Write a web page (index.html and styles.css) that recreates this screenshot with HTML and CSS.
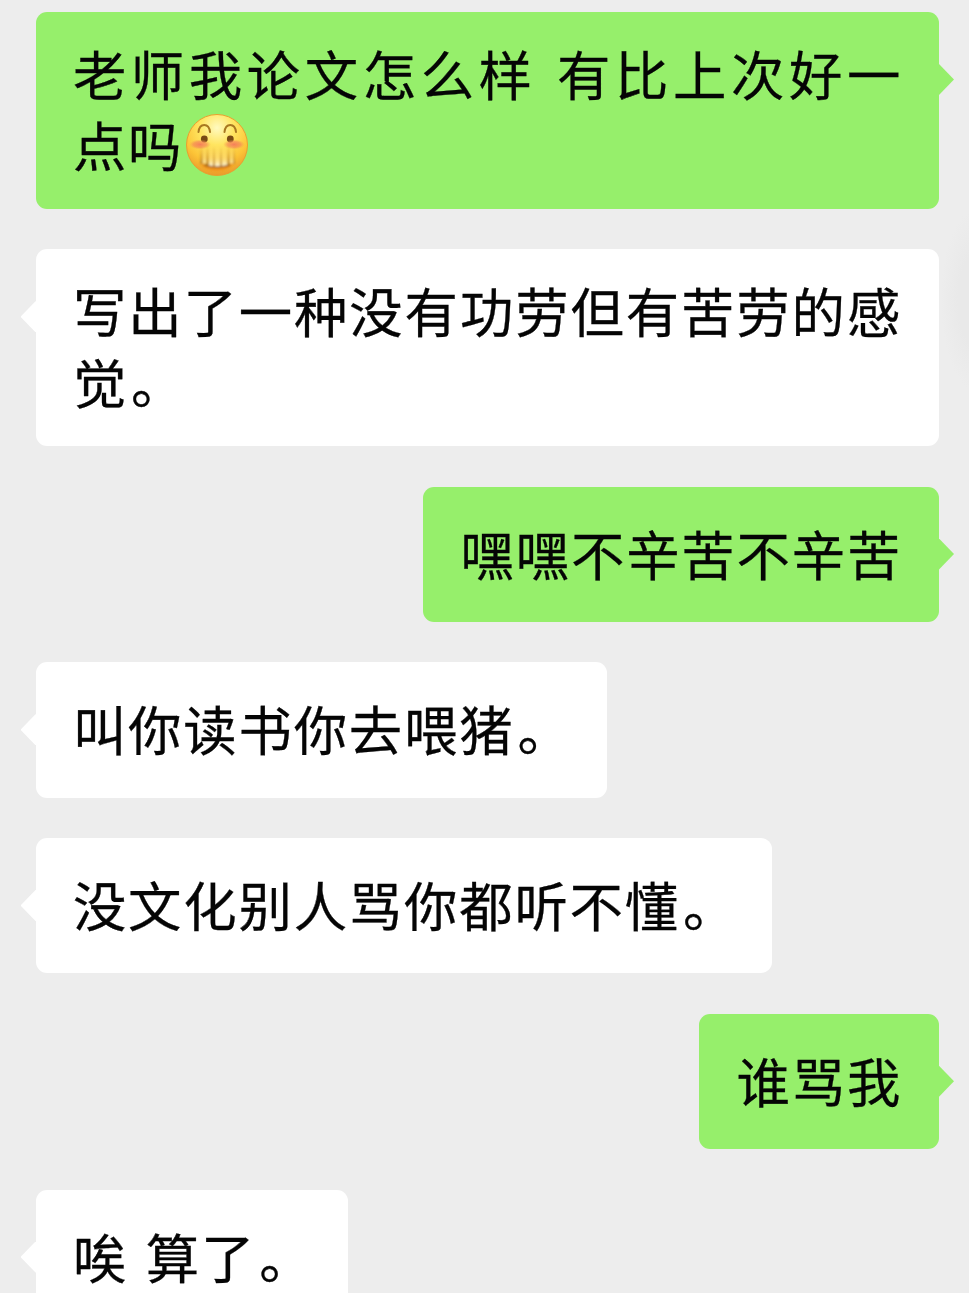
FILE: index.html
```html
<!DOCTYPE html>
<html lang="zh-CN">

<head>
    <meta charset="UTF-8">
    <meta name="viewport" content="width=device-width, initial-scale=1.0">
    <title>聊天</title>
    <link rel="stylesheet" href="styles.css">
</head>

<body>
    <div class="chat">
        <div class="bubble me long">老师我论文怎么样 有比上次好一点吗<svg class="emoji" viewBox="0 0 62 62">
                <defs>
                    <radialGradient id="face" cx="50%" cy="22%" r="80%">
                        <stop offset="0" stop-color="#fffac0" />
                        <stop offset="0.35" stop-color="#ffe560" />
                        <stop offset="0.7" stop-color="#fcc437" />
                        <stop offset="1" stop-color="#e8962a" />
                    </radialGradient>
                    <radialGradient id="cheek">
                        <stop offset="0" stop-color="#f4705c" stop-opacity="0.85" />
                        <stop offset="0.6" stop-color="#f58458" stop-opacity="0.65" />
                        <stop offset="1" stop-color="#f5a050" stop-opacity="0" />
                    </radialGradient>
                    <linearGradient id="tear" x1="0" y1="0" x2="0" y2="1">
                        <stop offset="0" stop-color="#ffe98a" stop-opacity="0" />
                        <stop offset="0.6" stop-color="#fff0a8" stop-opacity="0.4" />
                        <stop offset="1" stop-color="#fffbe8" />
                    </linearGradient>
                    <linearGradient id="shade" x1="0" y1="0" x2="0" y2="1">
                        <stop offset="0" stop-color="#d39a28" stop-opacity="0" />
                        <stop offset="1" stop-color="#a87828" stop-opacity="0.75" />
                    </linearGradient>
                    <filter id="soft">
                        <feGaussianBlur stdDeviation="0.9" />
                    </filter>
                </defs>
                <circle cx="31" cy="31" r="30.5" fill="url(#face)" stroke="#e8a030" />
                <!-- brows and eyes -->
                <path d="M12.500 18c1-9.500 10.500-9.500 11.500 0M38.500 18c1-9.500 10.500-9.500 11.500 0" fill="none" stroke="#a87820" stroke-width="2" stroke-linecap="round" />
                <circle cx="18.3" cy="25" r="3.4" fill="#784a14" />
                <circle cx="44.3" cy="25" r="3.4" fill="#784a14" />
                <ellipse cx="14" cy="30.5" rx="11" ry="5" fill="url(#cheek)" />
                <ellipse cx="48" cy="30.5" rx="11" ry="5" fill="url(#cheek)" />
                <!-- mouth -->
                <g filter="url(#soft)">
                    <path d="M14 50q17 5 34 0q-6 7-17 7t-17-7z" fill="#f0921e" />
                    <path d="M14 32h3v18h-3zM20 31h3v21h-3zM27 33h2v19h-2zM34 33h2v19h-2zM41 31h3v21h-3zM47 32h2v18h-2z" fill="url(#shade)" />
                    <path d="M17 32h3v17h-3zM23 31h4v21h-4zM29 31h5v22h-5zM36 31h5v21h-5zM44 32h3v17h-3z" fill="url(#tear)" />
                    <path d="M18 51q13 4 26 0" fill="none" stroke="#9a641c" stroke-width="1.500" />
                </g>
            </svg></div>
        <div class="bubble other long">写出了一种没有功劳但有苦劳的感觉<span class="stop">。</span></div>
        <div class="bubble me">嘿嘿不辛苦不辛苦</div>
        <div class="bubble other">叫你读书你去喂猪<span class="stop">。</span></div>
        <div class="bubble other">没文化别人骂你都听不懂<span class="stop">。</span></div>
        <div class="bubble me">谁骂我</div>
        <div class="bubble other">唉 算了<span class="stop">。</span></div>
    </div>
</body>

</html>
```
FILE: styles.css
```css
body {
    margin: 0;
    height: 1293px;
    overflow: hidden;
    background-color: #ededed;
    background-image: radial-gradient(ellipse 34px 90px at 975px 300px, #e9e9e9 50%, #ededed);
    background-repeat: no-repeat;
}

.chat {
    display: flex;
    flex-direction: column;
    gap: 40.5px;
    padding: 12px 30px 0 35.5px;
}

.bubble {
    position: relative;
    box-sizing: border-box;
    max-width: 903.5px;
    padding: 30px 36.9px 34.25px 37.4px;
    border-radius: 11px;
    font-family: "Noto Sans CJK SC", sans-serif;
    font-size: 53.4px;
    letter-spacing: 1.8px;
    line-height: 71px;
    word-spacing: 4px;
    white-space: nowrap;
    color: #050505;
    -webkit-text-stroke: 0.3px #050505;
}

.bubble.long {
    padding-top: 25px;
    padding-bottom: 29.75px;
    text-align: justify;
    white-space: normal;
}

/* little arrow on the side of the bubble */
.bubble::after {
    content: "";
    position: absolute;
    top: 52px;
    width: 16px;
    height: 31px;
}

.me {
    align-self: flex-end;
    background-color: #96ef6b;
}

.me::after {
    right: -15px;
    background-color: #96ef6b;
    clip-path: polygon(0 0, 1px 0, 100% 50%, 1px 100%, 0 100%);
}

.other {
    align-self: flex-start;
    background-color: #fff;
}

.other::after {
    left: -15px;
    background-color: #fff;
    clip-path: polygon(100% 0, 15px 0, 0 50%, 15px 100%, 100% 100%);
}

.stop {
    margin-left: 3px;
    letter-spacing: -1.2px;
}

.emoji {
    width: 62px;
    height: 62px;
    margin-left: 2.5px;
    margin-top: -10px;
    margin-bottom: -10px;
    vertical-align: 1px;
}
```
